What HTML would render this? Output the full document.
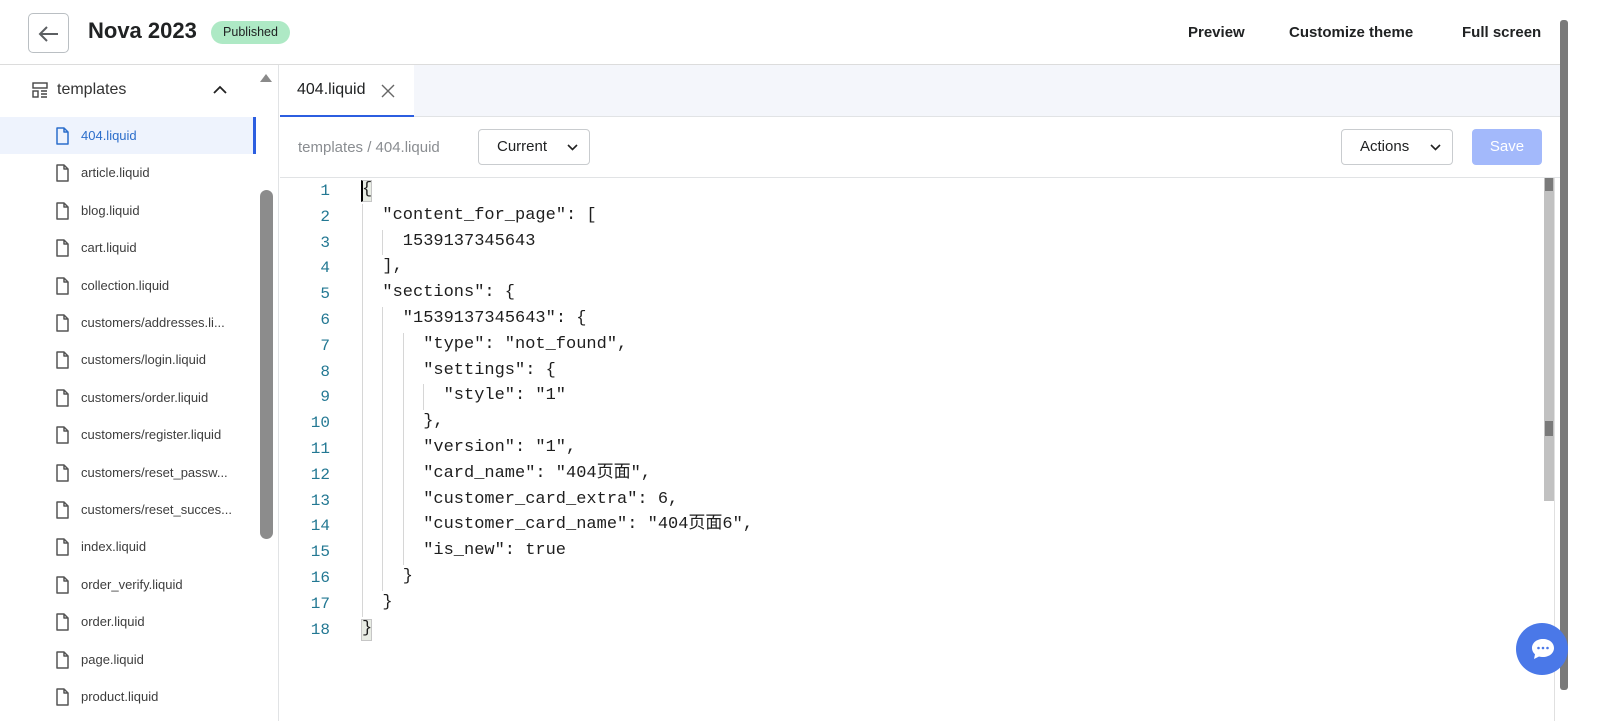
<!DOCTYPE html>
<html><head><meta charset="utf-8"><style>
*{box-sizing:border-box;margin:0;padding:0}
body{width:1612px;height:721px;overflow:hidden;background:#fff;font-family:"Liberation Sans","Noto Sans CJK SC",sans-serif;color:#202223;position:relative}
.a{position:absolute}
.hdr{left:0;top:0;width:1560px;height:65px;border-bottom:1px solid #dcdcdc}
.back{left:28px;top:13px;width:41px;height:40px;border:1px solid #babfc3;border-radius:5px}
.title{left:88px;top:18px;font-size:22px;font-weight:bold;color:#202223}
.badge{left:211px;top:21px;width:79px;height:23px;background:#aee9c5;border-radius:12px;font-size:12.5px;line-height:23px;text-align:center;color:#202223}
.nav{top:24px;font-size:15px;font-weight:bold;color:#202223}
.side{left:0;top:65px;width:279px;height:656px;border-right:1px solid #e1e3e5;background:#fff}
.item{position:absolute;left:0;width:256px;height:37px;font-size:13px;color:#3d3d3d;line-height:37px;padding-left:81px;white-space:nowrap}
.item svg{position:absolute;left:55px;top:10px}
.sel{background:#eef3fd;color:#2c6ecb;border-right:3px solid #2c5ee0}
.code{font-family:"Liberation Mono","Noto Sans CJK SC",monospace;font-size:17px;color:#1e1e1e;white-space:pre;line-height:22px;height:22px;overflow:visible}
.ln{position:absolute;left:280px;width:50px;text-align:right;color:#237893;font-family:"Liberation Mono",monospace;font-size:16px;line-height:22px}
.cl{position:absolute;left:362px;z-index:2}
.g{position:absolute;width:1px;background:#d6d6d6}
</style></head><body>
<div class="a hdr"></div>
<div class="a back"><svg width="41" height="40" viewBox="0 0 41 40"><path d="M29 20H12M18 13l-7 7 7 7" fill="none" stroke="#5c5f62" stroke-width="2"/></svg></div>
<div class="a title">Nova 2023</div>
<div class="a badge">Published</div>
<div class="a nav" style="left:1188px">Preview</div>
<div class="a nav" style="left:1289px">Customize theme</div>
<div class="a nav" style="left:1462px">Full screen</div>

<div class="a side">
<svg class="a" style="left:32px;top:17px" width="16" height="16" viewBox="0 0 16 16" fill="none" stroke="#444" stroke-width="1.4"><rect x="1" y="1" width="14" height="5"/><rect x="1" y="9" width="5" height="6"/><path d="M9 9h6M9 12h6M9 15h6"/></svg>
<div class="a" style="left:57px;top:16px;font-size:16px;color:#333">templates</div>
<svg class="a" style="left:212px;top:20px" width="16" height="10" viewBox="0 0 16 10"><path d="M2 8l6-6 6 6" fill="none" stroke="#222" stroke-width="1.8"/></svg>
<div id="items"></div>
<svg class="a" style="left:259px;top:6px" width="14" height="12"><path d="M1 11L7 3l6 8z" fill="#8a8a8a"/></svg>
<div class="a" style="left:260px;top:125px;width:13px;height:349px;background:#8c8c8c;border-radius:7px"></div>
</div>

<div class="a" style="left:280px;top:65px;width:1280px;height:52px;background:#f4f6fb;border-bottom:1px solid #e1e3e5"></div>
<div class="a" style="left:280px;top:65px;width:134px;height:52px;background:#fff;border-bottom:2px solid #2c5ee0"></div>
<div class="a" style="left:297px;top:81px;font-size:16px;color:#202223">404.liquid</div>
<svg class="a" style="left:381px;top:84px" width="14" height="14"><path d="M1 1l12 12M13 1L1 13" stroke="#666" stroke-width="1.4"/></svg>

<div class="a" style="left:280px;top:117px;width:1280px;height:61px;border-bottom:1px solid #e1e3e5"></div>
<div class="a" style="left:298px;top:139px;font-size:15px;color:#8a8d91">templates / 404.liquid</div>
<div class="a" style="left:478px;top:129px;width:112px;height:36px;border:1px solid #c9cccf;border-radius:4px;font-size:15px;line-height:34px;padding-left:18px;color:#202223">Current<svg class="a" style="left:88px;top:14px" width="11" height="7"><path d="M1 1l4.5 4.5L10 1" fill="none" stroke="#222" stroke-width="1.6"/></svg></div>
<div class="a" style="left:1341px;top:129px;width:112px;height:36px;border:1px solid #c9cccf;border-radius:4px;font-size:15px;line-height:34px;padding-left:18px;color:#202223">Actions<svg class="a" style="left:88px;top:14px" width="11" height="7"><path d="M1 1l4.5 4.5L10 1" fill="none" stroke="#222" stroke-width="1.6"/></svg></div>
<div class="a" style="left:1472px;top:129px;width:70px;height:36px;background:#a3b9fb;border-radius:4px;font-size:15px;line-height:36px;text-align:center;color:#fff">Save</div>

<div id="code"></div>

<div class="a" style="left:1544px;top:178px;width:11px;height:323px;background:#c1c1c1"></div>
<div class="a" style="left:1545px;top:178px;width:8px;height:13px;background:#7a7a7a"></div>
<div class="a" style="left:1545px;top:421px;width:8px;height:15px;background:#7a7a7a"></div>
<div class="a" style="left:1554px;top:178px;width:1px;height:543px;background:#e0e0e0"></div>
<div class="a" style="left:1560px;top:20px;width:8px;height:670px;background:#7a7a7a;border-radius:3px"></div>
<div class="a" style="left:1516px;top:623px;width:52px;height:52px;border-radius:50%;background:#4a78e8"></div>
<svg class="a" style="left:1530px;top:637px" width="26" height="24" viewBox="0 0 26 24"><path d="M13 2C6.5 2 2 6 2 11c0 2.5 1.2 4.700 3 6.3L4 22l5-2.5c1.2.4 2.6.5 4 .5 6.500 0 11-4 11-9S19.5 2 13 2z" fill="#fff"/><circle cx="8.5" cy="11" r="1.3" fill="#4a78e8"/><circle cx="13" cy="11" r="1.3" fill="#4a78e8"/><circle cx="17.5" cy="11" r="1.3" fill="#4a78e8"/></svg>

<script>
var names=["404.liquid","article.liquid","blog.liquid","cart.liquid","collection.liquid","customers/addresses.li...","customers/login.liquid","customers/order.liquid","customers/register.liquid","customers/reset_passw...","customers/reset_succes...","index.liquid","order_verify.liquid","order.liquid","page.liquid","product.liquid"];
var h="";
names.forEach(function(n,i){
var c=i==0?"#2c6ecb":"#555";
h+='<div class="item'+(i==0?' sel':'')+'" style="top:'+(52+i*37.4)+'px"><svg width="15" height="18" viewBox="0 0 15 18"><path d="M2 1h7l4 4v12H2z M9 1v4h4" fill="none" stroke="'+c+'" stroke-width="1.5" stroke-linejoin="round"/></svg>'+n+'</div>';
});
document.getElementById("items").innerHTML=h;
var L=[[0,'{'],[2,'"content_for_page": ['],[4,'1539137345643'],[2,'],'],[2,'"sections": {'],[4,'"1539137345643": {'],[6,'"type": "not_found",'],[6,'"settings": {'],[8,'"style": "1"'],[6,'},'],[6,'"version": "1",'],[6,'"card_name": "404页面",'],[6,'"customer_card_extra": 6,'],[6,'"customer_card_name": "404页面6",'],[6,'"is_new": true'],[4,'}'],[2,'}'],[0,'}']];
var s="";var lh=25.8,t0=178;
s+='<div class="a" style="left:361px;top:180px;width:11px;height:22px;background:#e8ece4;border:1px solid #c6c6c6;border-left:2px solid #000;z-index:1"></div>';
s+='<div class="a" style="left:361px;top:619px;width:11px;height:22px;background:#e8ece4;border:1px solid #c6c6c6;z-index:1"></div>';
L.forEach(function(l,i){
var y=t0+i*lh;
s+='<div class="ln" style="top:'+(y+2)+'px">'+(i+1)+'</div>';
s+='<div class="cl code" style="top:'+(y+1)+'px;left:'+(362+l[0]*10.2)+'px">'+l[1]+'</div>';
for(var k=0;k<l[0];k+=2){s+='<div class="g" style="left:'+(362+k*10.2)+'px;top:'+y+'px;height:'+lh+'px"></div>';}
});
document.getElementById("code").innerHTML=s;
</script>
</body></html>
